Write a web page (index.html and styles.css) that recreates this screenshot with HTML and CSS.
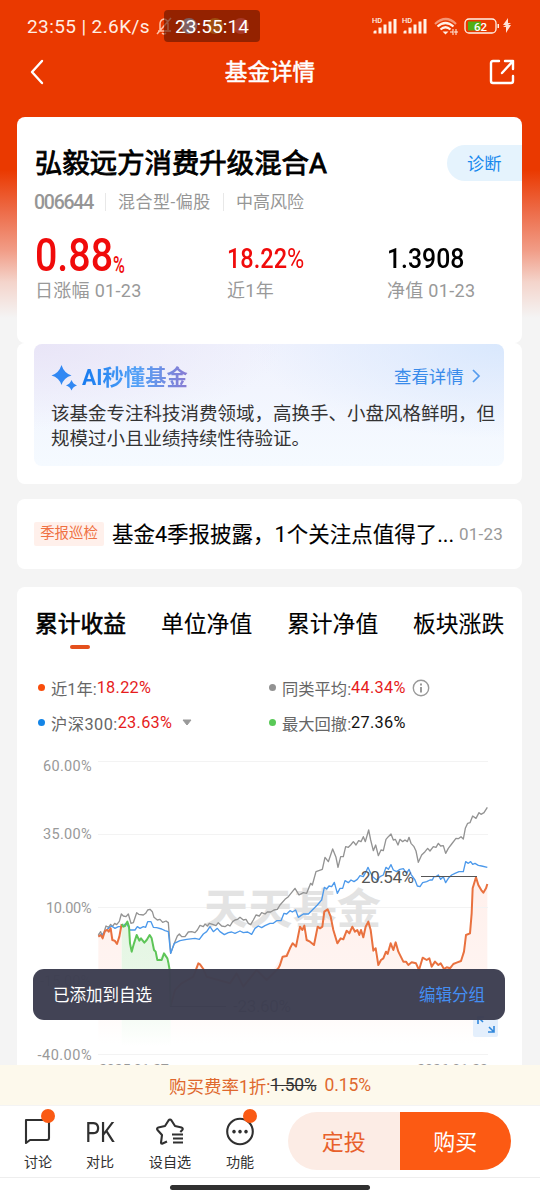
FILE: index.html
```html
<!DOCTYPE html>
<html lang="zh-CN">
<head>
<meta charset="utf-8">
<title>基金详情</title>
<link rel="stylesheet" href="styles.css">
</head>
<body>
<div class="screen">
  <header class="status">
    <span class="status-text">23:55 | 2.6K/s</span>
    <svg class="bell" width="18" height="20" viewBox="0 0 18 20"><path d="M3 15h13M5 14V8q0-4 4-5 4 1 4 5v6M7 17q2 2 4 0M2 18L16 2"/></svg>
    <span class="clock"><i class="dot-a"></i><i class="dot-b"></i><i class="dot-c"></i><b>23:55:14</b></span>
    <svg class="signals" width="142" height="22" viewBox="0 0 142 22">
      <g fill="#fff2e8">
        <g id="sig"><text x="0" y="8" class="hd">HD</text><path d="M1.500 18.500v-2l1-1h2v3zM6.500 18.500v-6h3v6zM11.500 18.500v-9h3v9zM16.500 18.500v-12h3v12zM21.500 18.500V4h3v14.500z"/></g>
        <use href="#sig" x="30"/>
      </g>
      <g fill="none" stroke="#fff2e8" stroke-width="2.200"><path d="M63 9q11-10 21 0" opacity=".5"/><path d="M65.500 11.500q8-7 16 0M68.500 14.500q5-4.500 10 0"/></g>
      <path d="M70.500 16.500h6l-3 3z" fill="#fff2e8"/><path d="M78 17h3v-3M81 17v3M84 14v6M82 17h4" stroke="#fff2e8" fill="none"/>
      <rect x="93" y="4" width="31" height="14" rx="4" fill="none" stroke="#fff2e8" stroke-width="1.300"/>
      <path d="M96 6.500h13v9H96z" fill="#52ae13"/><path d="M125.500 9h1.500v4h-1.500z" fill="#fff2e8"/>
      <text x="102" y="15.500" class="battery">62</text>
      <path d="M136 3l-5 7h3l-3 2h3v6l5-8h-3l3-2h-3z" fill="#ffe3d8"/>
    </svg>
  </header>
  <nav class="navbar">
    <svg width="16" height="26" viewBox="0 0 16 26"><path d="M14 2L4 13l10 11"/></svg>
    <h1>基金详情</h1>
    <svg width="26" height="26" viewBox="0 0 26 26"><path d="M10 2H4q-2 0-2 2v18q0 2 2 2h18q2 0 2-2v-5M16 2h8v8M24 2L13 14"/></svg>
  </nav>

  <main class="content">
    <section class="card fund">
      <div class="fund-head"><h2>弘毅远方消费升级混合A</h2><a class="diagnose">诊断</a></div>
      <div class="meta"><span class="code">006644</span><span class="kind">混合型-偏股</span><span>中高风险</span></div>
      <div class="metrics">
        <div><p class="num big red"><span>0.88</span><small>%</small></p><p class="label">日涨幅 01-23</p></div>
        <div><p class="num red"><span>18.22<em>%</em></span></p><p class="label">近1年</p></div>
        <div><p class="num nav-value"><span>1.3908</span></p><p class="label">净值 01-23</p></div>
      </div>
    </section>

    <section class="card ai">
      <div class="ai-box">
        <div class="ai-head">
          <svg width="27" height="28" viewBox="0 0 27 28"><path d="M10.500 1q2.500 8 10 10.500-7.500 2-10 9.500-2.500-7.500-10-9.500Q8 9 10.500 1zM20.500 16q1.500 4 5.500 5.500-4 1-5.500 5-1.500-4-5.500-5 4-1.500 5.500-5.500z" fill="#3188f3"/></svg>
          <h3>AI秒懂基金</h3>
          <a>查看详情</a>
          <svg class="more" width="9" height="16" viewBox="0 0 9 16"><path d="M1 2l6 6-6 6" fill="none" stroke="#549bee" stroke-width="1.700"/></svg>
        </div>
        <p>该基金专注科技消费领域，高换手、小盘风格鲜明，但<br>规模过小且业绩持续性待验证。</p>
      </div>
    </section>

    <section class="card notice">
      <span class="tag">季报巡检</span><strong>基金4季报披露，1个关注点值得了...</strong><time>01-23</time>
    </section>

    <section class="card trend">
      <div class="tabs"><span class="on">累计收益</span><span>单位净值</span><span>累计净值</span><span>板块涨跌</span></div>
      <div class="legend">
        <div><i class="c-orange"></i>近1年:<b>18.22%</b></div>
        <div><i class="c-grey"></i>同类平均:<b>44.34%</b><svg width="18" height="18" viewBox="0 0 18 18"><circle cx="9" cy="9" r="7.700" fill="none" stroke="#999" stroke-width="1.400"/><path d="M8 4.500h2v2H8zM8 8h2v5.500H8z" fill="#999"/></svg></div>
        <div><i class="c-blue"></i><span class="index">沪深300:</span><b>23.63%</b><svg class="caret" width="10" height="7" viewBox="0 0 10 7"><path d="M1 1h8L5 6z" fill="#999" stroke="#999" stroke-linejoin="round"/></svg></div>
        <div><i class="c-green"></i>最大回撤:<b class="black">27.36%</b></div>
      </div>
      <svg class="chart" width="505" height="325" viewBox="17 740 505 325">
        <defs>
          <linearGradient id="warm" gradientUnits="userSpaceOnUse" x1="0" y1="280" x2="0" y2="790"><stop offset="0" stop-color="#fff0ec"/><stop offset=".6" stop-color="#fff4f1"/><stop offset="1" stop-color="#fff"/></linearGradient>
          <linearGradient id="leaf" gradientUnits="userSpaceOnUse" x1="0" y1="420" x2="0" y2="800"><stop offset="0" stop-color="#e4f6e3"/><stop offset=".45" stop-color="#e8f7e7"/><stop offset="1" stop-color="#fff"/></linearGradient>
        </defs>
        <g transform="translate(80 780) scale(.33333)">
          <path fill="url(#warm)" d="M55 470L75 452 92 445 104 482 111 492 125 432V790H55zM272 678L305 610 340 590 355 550 380 590 450 610 470 580 490 620 530 570 560 600 605 530 650 490 660 440 680 480 702 495 713 440 733 395 743 388 752 410 772 490 800 452 817 440 850 472 865 425 880 512 895 555 932 490 947 487 970 545 1017 570 1100 562 1143 543 1158 465 1170 460 1178 325 1188 292 1210 338 1222 312V790H272z"/>
          <path fill="url(#leaf)" d="M125 432L142 425 150 490 155 515 170 465 193 488 209 465 232 540 252 520 269 570 272 680V800H125z"/>
        </g>
        <path d="M98 761.500H488M98 834.500H488M98 907.500H488M98 981H488M98 1054.500H488" stroke="#f3f3f3"/>
        <text class="watermark" x="204" y="924" textLength="177" lengthAdjust="spacingAndGlyphs">天天基金</text>
        <g class="lines" transform="translate(80 780) scale(.33333)">
          <polyline stroke="#939393" points="55,465 62,455 68,470 78,438 86,442 92,433 97,440 104,430 110,434 118,424 124,402 130,408 138,410 145,402 153,430 160,428 170,398 176,403 190,405 197,400 203,390 210,388 217,395 222,412 232,420 240,418 248,427 258,423 265,428 272,520 283,490 292,468 298,462 305,470 315,470 325,456 335,455 345,458 352,450 360,436 370,440 375,432 382,438 388,430 400,434 408,437 415,428 425,438 435,440 443,434 450,438 458,425 465,420 473,418 480,412 490,420 498,418 505,430 512,434 520,420 528,405 538,408 545,398 555,402 562,396 572,396 582,390 592,388 600,375 615,358 625,350 645,325 657,345 670,338 680,340 692,310 697,315 708,275 727,268 735,232 745,245 758,207 768,232 774,262 782,230 790,230 797,200 805,202 812,195 820,185 828,195 836,182 843,185 850,170 856,185 866,150 872,180 880,212 887,195 895,227 903,210 910,212 918,178 925,170 933,162 940,180 946,178 954,195 960,178 968,185 975,180 982,185 987,172 993,190 1002,200 1008,213 1015,247 1025,225 1035,215 1043,205 1050,213 1060,200 1068,202 1075,190 1082,198 1090,197 1097,220 1105,205 1115,192 1128,175 1135,176 1143,170 1150,177 1156,145 1163,130 1170,128 1178,108 1188,115 1197,98 1203,103 1212,98 1222,82"/>
          <polyline stroke="#4c99eb" points="55,468 68,462 85,445 95,438 105,445 115,440 125,440 140,430 150,450 165,450 172,440 180,445 190,440 197,442 203,425 213,425 220,442 230,443 245,447 255,452 265,455 272,520 283,490 300,482 320,478 345,475 358,478 370,462 380,455 390,440 400,455 412,445 420,455 433,464 445,458 455,456 465,460 480,453 490,458 503,456 515,463 525,445 535,438 545,443 555,437 570,430 580,430 590,422 603,422 612,400 620,402 630,392 637,396 647,390 655,412 670,402 685,402 700,387 712,375 725,360 733,322 740,327 747,318 755,320 763,307 772,340 780,325 788,325 795,302 805,308 813,300 822,305 832,298 840,287 850,290 858,275 864,262 870,275 878,290 890,300 900,290 910,285 918,262 925,268 933,254 940,270 950,275 960,268 970,266 980,280 987,268 993,283 1005,300 1012,318 1020,320 1028,308 1040,305 1050,300 1057,300 1062,290 1068,290 1075,285 1082,298 1090,290 1097,308 1105,295 1115,285 1125,280 1137,275 1150,275 1157,245 1165,250 1172,245 1178,253 1185,250 1195,256 1205,258 1222,262"/>
          <g class="thick"><polyline stroke="#e9713f" points="55,470 62,465 68,475 75,452 82,450 86,455 92,445 97,480 104,482 111,492 118,470 125,432"/>
          <polyline stroke="#e9713f" points="272,678 285,630 305,610 340,590 355,550 360,553 370,567 380,590 450,610 470,580 490,620 530,570 560,600 595,565 600,555 608,530 620,528 630,505 638,490 648,500 660,440 667,450 673,437 680,480 690,485 702,495 713,440 720,445 727,440 733,395 743,388 752,410 760,450 772,490 782,475 790,478 800,452 808,460 817,440 825,455 832,450 838,465 843,450 850,472 857,440 865,425 872,450 880,512 887,505 895,555 903,540 910,535 918,515 923,522 932,490 940,510 947,487 955,515 970,545 978,545 985,555 995,547 1008,550 1017,570 1028,533 1040,540 1048,535 1055,560 1065,545 1075,555 1082,550 1092,567 1100,562 1110,565 1120,552 1130,548 1143,543 1152,515 1158,465 1170,460 1175,400 1178,325 1188,292 1195,315 1205,332 1210,338 1218,325 1222,312"/>
          <polyline stroke="#5dc557" points="125,432 130,440 135,438 142,425 147,440 150,490 155,515 162,490 170,465 178,482 183,475 193,488 200,480 209,465 215,475 222,510 227,515 232,540 245,540 252,520 262,535 265,548 269,570 272,680"/></g>
        </g>
        <path d="M421 876.500h56M170 1006.500h56" stroke="#555" stroke-width="1.200"/>
        <g class="marks"><text x="361" y="883" textLength="53">20.54%</text><text x="233" y="1012" textLength="58">-23.60%</text></g>
        <g class="axis"><text x="43" y="771" textLength="48.500">60.00%</text><text x="43" y="839" textLength="48.500">35.00%</text><text x="46" y="912.500" textLength="45.500">10.00%</text><text x="40" y="986" textLength="51">-15.00%</text><text x="37.500" y="1059.500" textLength="54">-40.00%</text><text x="99" y="1074.500" textLength="70">2025-01-27</text><text x="417" y="1074.500" textLength="71">2026-01-23</text></g>
        <rect x="473" y="1011" width="25" height="26" rx="2" fill="#e4effc"/>
        <path d="M478 1024v-7h6M478 1017l5 5M494 1026v6h-6M494 1032l-5-5" fill="none" stroke="#3188db" stroke-width="1.600"/>
      </svg>
    </section>
  </main>

  <aside class="toast"><span>已添加到自选</span><a>编辑分组</a></aside>

  <footer>
    <div class="fee"><span>购买费率1折:</span><s>1.50%</s><b>0.15%</b></div>
    <div class="actions">
      <div class="tools">
        <div class="discuss"><svg width="30" height="30" viewBox="0 0 30 30"><path d="M3 4h21q2 0 2 2v16q0 2-2 2H7l-4 3z"/></svg><span>讨论</span><i class="badge"></i></div>
        <div><em>PK</em><span>对比</span></div>
        <div><svg width="30" height="30" viewBox="0 0 30 30"><path d="M12 25.500l-5 2.200q-1 0-1-1l1-7.700-4.500-5q-1.200-1.800.8-2.500l6.700-1.500 3.500-5.500q1.500-2 3 0l3.500 5.500 6.500 1.500q2 .7.800 2.500l-2 2M17 18.500h11M18 22.500h10M18 26.500h10"/></svg><span>设自选</span></div>
        <div><svg width="30" height="30" viewBox="0 0 30 30"><circle cx="15" cy="15.500" r="12.800"/><path d="M9 13.800a1.800 1.800 0 1 0 .01 0zM15 13.800a1.800 1.800 0 1 0 .01 0zM21 13.800a1.800 1.800 0 1 0 .01 0z" fill="#303030" stroke="none"/></svg><span>功能</span><i class="badge"></i></div>
      </div>
      <div class="buy"><button>定投</button><button class="primary">购买</button></div>
    </div>
    <div class="home"><i></i></div>
  </footer>
</div>
</body>
</html>
```
FILE: styles.css
```css
* { box-sizing: border-box; }
body, h1, h2, h3, p { margin: 0; }
i, em { font-style: normal; }
body { font-family: Roboto, "Noto Sans CJK SC", sans-serif; color: #111; background: #f4f4f4; }
.screen {
  position: relative; width: 540px; height: 1200px; overflow: hidden;
  display: flex; flex-direction: column; white-space: nowrap;
  background: linear-gradient(#ea3900 0, #ea3900 170px, #ed6a46 210px, #f19c86 250px, #f4d4cb 282px, #f4f4f4 318px);
}
.status { display: flex; align-items: center; height: 52px; padding: 0 26px 0 27px; color: #ffeee4; flex: none; }
.status-text { width: 128px; font-size: 19px; letter-spacing: .4px; padding-top: 1px; }
.bell { fill: none; stroke: #ffc0a5; stroke-width: 1.500; margin-right: -9px; }
.clock {
  display: flex; align-items: center; position: relative; width: 96px; height: 32px;
  border-radius: 4px; background: rgba(90, 20, 0, .6); color: #fff; padding-left: 17px;
}
.clock b { position: absolute; left: 11px; top: 6px; font-size: 19px; line-height: 22px; font-weight: 400; letter-spacing: .1px; }
.clock i { width: 16px; height: 16px; border-radius: 50%; margin-right: 10px; opacity: .6; }
.dot-a { background: #728aa4; }
.dot-b { background: #a76a19; }
.dot-c { background: #b64a43; }
.signals { margin-left: 112px; flex: none; }
.hd { font: 500 7.500px Roboto; }
.battery { font: 500 11.500px Roboto; fill: #fff; }
.navbar { display: flex; justify-content: space-between; align-items: center; height: 40px; padding: 0 25px 0 28px; flex: none; }
.navbar svg { fill: none; stroke: #fff; stroke-width: 2.400; stroke-linecap: round; stroke-linejoin: round; }
.navbar h1 { color: #fff; font-size: 22.600px; line-height: 30px; font-weight: 400; -webkit-text-stroke: .5px #fff; margin: 1px 0 0 7px; }

.content { padding: 25px 18px 0 17px; height: 973px; overflow: hidden; flex: none; }
.card { background: #fff; border-radius: 8px; }
.fund { height: 226px; padding: 28px 0 0 18px; }
.fund-head { display: flex; justify-content: space-between; align-items: center; height: 36px; }
.fund-head h2 { font-size: 27.400px; line-height: 36px; margin-top: 2px; font-weight: 400; -webkit-text-stroke: .85px #000; color: #000; }
.diagnose { width: 75px; height: 36px; line-height: 38px; padding-left: 20px; border-radius: 18px 0 0 18px; background: #e5f3fd; color: #1889ee; font-size: 17.300px; }
.meta { display: flex; align-items: center; height: 20px; margin-top: 11px; font-size: 17px; color: #969696; }
.meta .code { font-size: 19.500px; font-weight: 500; width: 71px; letter-spacing: -1.250px; margin-left: -1px; }
.meta span + span { border-left: 1px solid #e8e8e8; height: 18px; line-height: 18px; padding-left: 12px; }
.meta .kind { width: 118px; letter-spacing: .5px; }
.metrics { display: grid; grid-template-columns: 192px 160px 1fr; margin-top: 17px; }
.num { height: 50px; font-size: 28px; line-height: 59px; font-weight: 500; }
.num span { display: inline-block; transform: scaleX(.84); transform-origin: left; }
.num em { font-weight: 400; }
.nav-value { color: #000; }
.nav-value span { transform: scaleX(.885); }
.big { font-size: 45.500px; line-height: 53px; font-weight: 500; }
.big span { transform: scaleX(.865); margin-right: -12px; }
.big small { display: inline-block; font-size: 23px; transform: translateY(2px) scaleX(.7); transform-origin: left; }
.red { color: #f00b0b; }
.label { font-size: 18px; line-height: 24px; color: #999; letter-spacing: .3px; }
.ai { height: 141px; padding: 1px 18px 0 17px; }
.ai-box { height: 122px; padding: 19px 0 0 17px; border-radius: 8px; background: radial-gradient(ellipse 250px 85px at 0 0, #e9e5f7, transparent), radial-gradient(ellipse 250px 95px at 100% 0, #d9e8fd, transparent), linear-gradient(#f0f2fd, #f5faff); }
.ai-head { display: flex; align-items: center; height: 30px; }
.ai-head h3 { font-size: 21.300px; line-height: 28px; font-weight: 700; margin-left: 4px; width: 312px; background: linear-gradient(90deg, #167aef, #54a2f7 55px, #897bd2 106px); -webkit-background-clip: text; background-clip: text; color: transparent; }
.ai-head a { font-size: 17.400px; line-height: 24px; margin-top: -2px; color: #398bea; margin-right: 8px; }
.more { margin-top: -4px; }
.ai-box p { font-size: 18.500px; line-height: 25px; color: #333; margin-top: 9px; }
.notice { height: 70px; margin-top: 15px; display: flex; align-items: center; padding: 0 17px; }
.tag { width: 70px; height: 24px; line-height: 24px; text-align: center; background: #fff0eb; color: #ef7043; font-size: 14.400px; border-radius: 2px; }
.notice strong { width: 347px; padding-left: 8px; font-weight: 400; font-size: 21.500px; line-height: 28px; margin-top: 2px; -webkit-text-stroke: .1px #000; color: #000; }
.notice time { font-size: 17px; color: #999; letter-spacing: .2px; margin-left: 8px; }
.trend { margin-top: 18px; height: 500px; }
.tabs { display: flex; gap: 35px; height: 66px; padding: 22px 18px 0; font-size: 22.800px; line-height: 32px; color: #000; }
.tabs span { width: 91px; -webkit-text-stroke: .1px #000; }
.tabs .on { display: flex; flex-direction: column; align-items: center; -webkit-text-stroke: .6px #000; }
.tabs .on::after { content: ""; width: 20px; height: 4px; border-radius: 2px; background: #e4501c; margin: 4px 2px 0 0; }
.legend { display: grid; grid-template-columns: 231px 1fr; grid-auto-rows: 35px; height: 87px; padding: 17px 0 0 21px; font-size: 16.300px; color: #666; }
.legend div { display: flex; align-items: center; }
.legend i { width: 7px; height: 7px; border-radius: 50%; margin-right: 6px; }
.legend b { font-weight: 400; color: #e61c1c; letter-spacing: .3px; }
.legend .black { color: #111; }
.legend svg { margin-left: 6px; }
.legend .caret { margin-left: 10px; }
.index { letter-spacing: .45px; }
.c-orange { background: #f94d0b; }
.c-grey { background: #929292; }
.c-blue { background: #1485e7; }
.c-green { background: #59c957; }
.chart { display: block; }
.lines { fill: none; stroke-width: 4; stroke-linejoin: round; }
.thick { stroke-width: 6; }
.axis { font: 14.500px Roboto; fill: #999; }
.marks { font: 17px Roboto; fill: #555; }
.watermark { font: 700 42px "Noto Sans CJK SC", sans-serif; fill: #e3e3e3; }

.toast { position: absolute; left: 33px; top: 969px; width: 472px; height: 51px; padding: 0 20px 2px; border-radius: 11px; background: rgba(62, 63, 82, .98); color: #fff; display: flex; align-items: center; justify-content: space-between; font-size: 16.500px; }
.toast a { color: #448ef2; }
footer { height: 135px; flex: none; background: #fff; }
.fee { display: flex; justify-content: center; align-items: center; height: 40px; background: #fdf9ec; color: #df682e; font-size: 17.500px; }
.fee s { color: #333; letter-spacing: -.2px; }
.fee b { font-weight: 400; margin-left: 8px; letter-spacing: -.1px; }
.actions { display: flex; justify-content: space-between; height: 73px; padding: 7px 29px 0 3px; border-top: 1px solid #f4f4f4; border-bottom: 1px solid #eee; }
.tools { display: flex; }
.tools > div { width: 70px; height: 60px; position: relative; display: flex; flex-direction: column; align-items: center; }
.tools .discuss { margin-right: -8px; }
.tools svg { height: 34px; padding-top: 2px; fill: none; stroke: #303030; stroke-width: 2.100; stroke-linejoin: round; overflow: visible; }
.tools em { font-size: 27px; line-height: 40px; height: 34px; color: #303030; transform: scaleX(.87); }
.tools span { font-size: 14.100px; line-height: 20px; margin-top: 5px; color: #303030; }
.badge { position: absolute; left: 38px; top: -4px; width: 14px; height: 14px; border-radius: 50%; background: #fa5a14; }
.buy { display: flex; width: 223px; height: 58px; margin-top: -1px; border-radius: 29px; overflow: hidden; }
.buy button { width: 50%; border: 0; padding: 0 0 3px; background: #fcece5; color: #e8602b; font: 22px "Noto Sans CJK SC", sans-serif; }
.buy .primary { background: #fc5a13; color: #fff; }
.home { display: flex; justify-content: center; padding: 7px 0 0; }
.home i { width: 200px; height: 5px; border-radius: 3px; background: #303030; }
```
